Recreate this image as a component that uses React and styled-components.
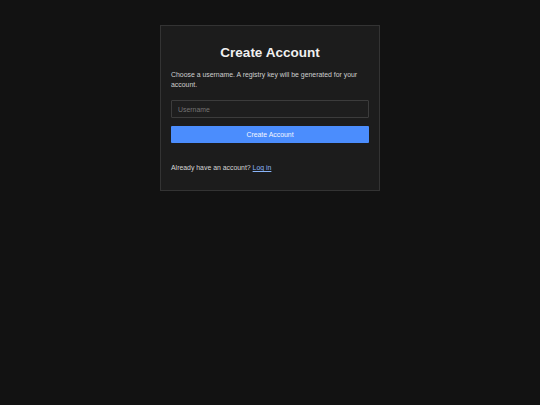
import React from 'react';
import styled, { createGlobalStyle } from 'styled-components';

const GlobalStyle = createGlobalStyle`
  html, body {
    margin: 0;
    padding: 0;
    background: #121212;
    font-family: "Liberation Sans", Arial, sans-serif;
    color: #e6e6e6;
  }
`;

const Page = styled.main`
  min-height: 405px;
  display: flex;
  justify-content: center;
  align-items: flex-start;
  padding-top: 25px;
  box-sizing: border-box;
`;

const Card = styled.section`
  width: 220px;
  box-sizing: border-box;
  background: #1c1c1c;
  border: 1px solid #333333;
  padding: 12px 10px 17px;
  display: flex;
  flex-direction: column;
`;

const Title = styled.h1`
  margin: 7px 0 9px;
  font-size: 13.5px;
  line-height: 16px;
  font-weight: bold;
  text-align: center;
  color: #f0f0f0;
`;

const Description = styled.p`
  margin: 0 0 10px;
  font-size: 6.9px;
  line-height: 10px;
  color: #cfcfcf;
`;

const Input = styled.input`
  height: 18px;
  box-sizing: border-box;
  background: #1e1e1e;
  border: 1px solid #3c3c3c;
  border-radius: 1px;
  padding: 0 6px;
  font-family: inherit;
  font-size: 6.9px;
  color: #e6e6e6;
  outline: none;

  &::placeholder {
    color: #747474;
  }
`;

const Button = styled.button`
  margin-top: 8px;
  height: 17px;
  border: none;
  border-radius: 1px;
  background: #4b8dfd;
  color: #f4f7ff;
  font-family: inherit;
  font-size: 6.9px;
  cursor: pointer;
`;

const Footer = styled.p`
  margin: 20px 0 0;
  font-size: 6.9px;
  line-height: 10px;
  color: #d6d6d6;
`;

const Link = styled.a`
  color: #8ab4f8;
  text-decoration: underline;
`;

export default function App() {
  return (
    <>
      <GlobalStyle />
      <Page>
        <Card>
          <Title>Create Account</Title>
          <Description>
            Choose a username. A registry key will be generated for your account.
          </Description>
          <Input placeholder="Username" />
          <Button>Create Account</Button>
          <Footer>
            Already have an account? <Link href="#">Log in</Link>
          </Footer>
        </Card>
      </Page>
    </>
  );
}
